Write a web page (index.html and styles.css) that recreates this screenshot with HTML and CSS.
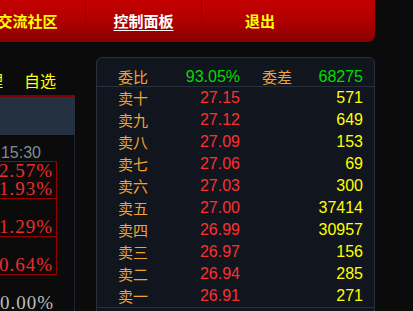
FILE: index.html
```html
<!DOCTYPE html>
<html lang="zh-CN">

<head>
    <meta charset="UTF-8">
    <meta name="viewport" content="width=device-width, initial-scale=1.0">
    <title>盘口</title>
    <link rel="stylesheet" href="styles.css">
</head>

<body>
    <div class="nav">
        <a class="nav-item" href="#">交流社区</a>
        <a class="nav-item active" href="#">控制面板</a>
        <a class="nav-item" href="#">退出</a>
    </div>

    <div class="main">
        <div class="side">
            <div class="tabs">
                <span class="tab cut">理</span>
                <span class="tab">自选</span>
            </div>
            <div class="side-head"></div>
            <div class="side-body">
                <div class="time">15:30</div>
                <div class="cell first">
                    <span>2.57%</span>
                    <span>1.93%</span>
                </div>
                <div class="cell"><span>1.29%</span></div>
                <div class="cell"><span>0.64%</span></div>
                <div class="cell last"><span>0.00%</span></div>
            </div>
        </div>

        <div class="book">
            <div class="book-head">
                <span class="lbl">委比</span>
                <span class="green">93.05%</span>
                <span class="lbl gap">委差</span>
                <span class="green num">68275</span>
            </div>
            <div class="rows">
                <div class="row"><span class="lbl">卖十</span><span class="price">27.15</span><span></span><span class="vol">571</span></div>
                <div class="row"><span class="lbl">卖九</span><span class="price">27.12</span><span></span><span class="vol">649</span></div>
                <div class="row"><span class="lbl">卖八</span><span class="price">27.09</span><span></span><span class="vol">153</span></div>
                <div class="row"><span class="lbl">卖七</span><span class="price">27.06</span><span></span><span class="vol">69</span></div>
                <div class="row"><span class="lbl">卖六</span><span class="price">27.03</span><span></span><span class="vol">300</span></div>
                <div class="row"><span class="lbl">卖五</span><span class="price">27.00</span><span></span><span class="vol">37414</span></div>
                <div class="row"><span class="lbl">卖四</span><span class="price">26.99</span><span></span><span class="vol">30957</span></div>
                <div class="row"><span class="lbl">卖三</span><span class="price">26.97</span><span></span><span class="vol">156</span></div>
                <div class="row"><span class="lbl">卖二</span><span class="price">26.94</span><span></span><span class="vol">285</span></div>
                <div class="row"><span class="lbl">卖一</span><span class="price">26.91</span><span></span><span class="vol">271</span></div>
            </div>
            <div class="book-foot"></div>
        </div>
    </div>
</body>

</html>
```

FILE: styles.css
```css
* {
    box-sizing: border-box;
}

body {
    margin: 0;
    width: 413px;
    height: 311px;
    overflow: hidden;
    background-color: #0b0b0b;
    font-family: "Liberation Sans", "Noto Sans CJK SC", sans-serif;
}

.nav {
    display: flex;
    width: 405px;
    height: 42px;
    margin-left: -30px;
    background: linear-gradient(#c40000, #b00000 50%, #880000);
    border-bottom-right-radius: 7px;
}

.nav-item {
    width: 116px;
    border-right: 1px solid #9a0000;
    text-align: center;
    line-height: 41px;
    font-size: 15px;
    font-weight: bold;
    font-family: "Noto Sans CJK SC", sans-serif;
    color: #ffff00;
    text-decoration: none;
}

.nav-item:last-child {
    border-right: none;
}

.nav-item.active {
    color: #fff;
    text-decoration: underline;
    text-underline-offset: 3px;
}

.main {
    display: flex;
    gap: 21px;
    margin-top: 15px;
}

.side {
    width: 75px;
    flex-shrink: 0;
}

.tabs {
    display: flex;
    gap: 21px;
    height: 38px;
    padding-top: 12px;
    line-height: 22px;
    font-size: 16px;
    font-family: "Noto Sans CJK SC", sans-serif;
    color: #ffff00;
    white-space: nowrap;
}

.tab.cut {
    margin-left: -13px;
}

.side-head {
    height: 40px;
    border-top: 2px solid #820000;
    background-color: #243140;
}

.side-body {
    height: 180px;
    border-right: 1px solid #1c2631;
}

.time {
    height: 26px;
    padding-top: 8px;
    padding-right: 33px;
    line-height: 19px;
    text-align: right;
    font-size: 16px;
    color: #7f8c99;
}

.cell {
    display: flex;
    flex-direction: column;
    justify-content: flex-end;
    align-items: flex-end;
    width: 77px;
    height: 38px;
    margin-left: -20px;
    padding-right: 3px;
    border-top: 1px solid #9b0000;
    border-right: 1px solid #9b0000;
    font-family: "Liberation Serif", serif;
    font-size: 19px;
    line-height: 18px;
    letter-spacing: 1px;
    color: #ec2d2d;
    white-space: nowrap;
}

.cell.first {
    height: 37px;
    justify-content: space-between;
}

.cell.last {
    border-right: none;
    color: #bdbdbd;
}

.book {
    width: 279px;
    height: 270px;
    border: 1px solid #27313d;
    border-radius: 6px;
    background-color: #10151e;
    font-size: 16px;
}

.book-head,
.row {
    display: grid;
    grid-template-columns: 60px 62px 60px 1fr;
    padding: 0 11px 0 21px;
    white-space: nowrap;
}

.book-head {
    height: 29px;
    padding-top: 8px;
    line-height: 21px;
    border-bottom: 1px solid #27313d;
}

.row {
    height: 22px;
    line-height: 22px;
}

.lbl {
    color: #f4a233;
    font-family: "Noto Sans CJK SC", sans-serif;
    font-size: 15px;
}

.gap {
    padding-left: 22px;
}

.green {
    color: #00dd00;
    text-align: right;
}

.price {
    color: #ff2f2f;
    text-align: right;
}

.vol {
    color: #ffff00;
    text-align: right;
}

.book-foot {
    border-top: 1px solid #27313d;
}
```
